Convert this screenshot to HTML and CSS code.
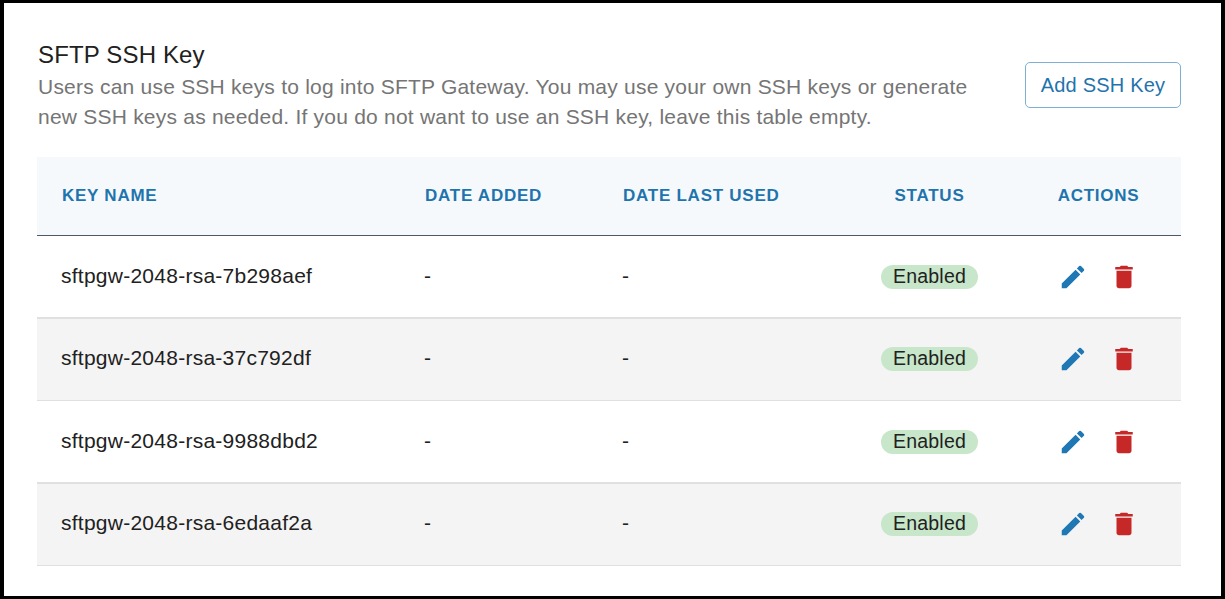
FILE: index.html
```html
<!DOCTYPE html>
<html lang="en">
<head>
<meta charset="utf-8">
<title>SFTP SSH Key</title>
<link rel="stylesheet" href="styles.css">
</head>
<body>
<main class="frame">
  <header class="head">
    <div class="intro">
      <h1 class="title">SFTP SSH Key</h1>
      <p class="desc">Users can use SSH keys to log into SFTP Gateway. You may use your own SSH keys or generate new SSH keys as needed. If you do not want to use an SSH key, leave this table empty.</p>
    </div>
    <button class="add" type="button">Add SSH Key</button>
  </header>
  <div class="table">
    <div class="row hdr">
      <div class="c">KEY NAME</div><div class="c">DATE ADDED</div><div class="c">DATE LAST USED</div><div class="c mid">STATUS</div><div class="c mid last">ACTIONS</div>
    </div>
    <div class="row">
      <div class="c t">sftpgw-2048-rsa-7b298aef</div><div class="c t">-</div><div class="c t">-</div><div class="c mid"><span class="badge">Enabled</span></div>
      <div class="c acts"><svg class="ico pen" viewBox="0 0 24 24"><path d="M3 17.25V21h3.75L17.81 9.94l-3.75-3.75L3 17.25zM20.71 7.04a1 1 0 0 0 0-1.41l-2.34-2.34a1 1 0 0 0-1.41 0l-1.83 1.83 3.75 3.75 1.83-1.83z"/></svg><svg class="ico bin" viewBox="0 0 24 24"><path d="M6 19c0 1.1.9 2 2 2h8c1.100 0 2-.9 2-2V7H6v12zM19 4h-3.500l-1-1h-5l-1 1H5v2h14V4z"/></svg></div>
    </div>
    <div class="row alt">
      <div class="c t">sftpgw-2048-rsa-37c792df</div><div class="c t">-</div><div class="c t">-</div><div class="c mid"><span class="badge">Enabled</span></div>
      <div class="c acts"><svg class="ico pen" viewBox="0 0 24 24"><path d="M3 17.25V21h3.75L17.81 9.94l-3.75-3.75L3 17.25zM20.71 7.04a1 1 0 0 0 0-1.41l-2.34-2.34a1 1 0 0 0-1.41 0l-1.83 1.83 3.75 3.75 1.83-1.83z"/></svg><svg class="ico bin" viewBox="0 0 24 24"><path d="M6 19c0 1.1.9 2 2 2h8c1.100 0 2-.9 2-2V7H6v12zM19 4h-3.500l-1-1h-5l-1 1H5v2h14V4z"/></svg></div>
    </div>
    <div class="row">
      <div class="c t">sftpgw-2048-rsa-9988dbd2</div><div class="c t">-</div><div class="c t">-</div><div class="c mid"><span class="badge">Enabled</span></div>
      <div class="c acts"><svg class="ico pen" viewBox="0 0 24 24"><path d="M3 17.25V21h3.75L17.81 9.94l-3.75-3.75L3 17.25zM20.71 7.04a1 1 0 0 0 0-1.41l-2.34-2.34a1 1 0 0 0-1.41 0l-1.83 1.83 3.75 3.75 1.83-1.83z"/></svg><svg class="ico bin" viewBox="0 0 24 24"><path d="M6 19c0 1.1.9 2 2 2h8c1.100 0 2-.9 2-2V7H6v12zM19 4h-3.500l-1-1h-5l-1 1H5v2h14V4z"/></svg></div>
    </div>
    <div class="row alt">
      <div class="c t">sftpgw-2048-rsa-6edaaf2a</div><div class="c t">-</div><div class="c t">-</div><div class="c mid"><span class="badge">Enabled</span></div>
      <div class="c acts"><svg class="ico pen" viewBox="0 0 24 24"><path d="M3 17.25V21h3.75L17.81 9.94l-3.75-3.75L3 17.25zM20.71 7.04a1 1 0 0 0 0-1.41l-2.34-2.34a1 1 0 0 0-1.41 0l-1.83 1.83 3.75 3.75 1.83-1.83z"/></svg><svg class="ico bin" viewBox="0 0 24 24"><path d="M6 19c0 1.1.9 2 2 2h8c1.100 0 2-.9 2-2V7H6v12zM19 4h-3.500l-1-1h-5l-1 1H5v2h14V4z"/></svg></div>
    </div>
  </div>
</main>
</body>
</html>
```
FILE: styles.css
```css
* { box-sizing: border-box; }
html, body { margin: 0; height: 100%; }
body { background: #fff; font-family: "Liberation Sans", Arial, sans-serif; overflow: hidden; }
.frame { height: 599px; width: 1225px; border: solid #000; border-width: 3px 4px 3px 4px; padding: 39px 40px 0 33px; }
.head { display: flex; justify-content: space-between; align-items: flex-start; height: 115px; }
.intro { width: 945px; padding-left: 1px; }
.title { margin: 0; font-size: 24px; font-weight: 400; line-height: 26px; color: #212121; letter-spacing: .15px; }
.desc { margin: 4px 0 0; font-size: 21px; line-height: 30px; color: #757575; letter-spacing: .22px; }
.add { width: 156px; height: 46px; margin-top: 20px; background: #fff; border: 1px solid #7fb0d3; border-radius: 5px; color: #1f74ad; font: 20px/24px "Liberation Sans", Arial, sans-serif; letter-spacing: .2px; padding: 0; }
.table { width: 1144px; }
.row { display: grid; grid-template-columns: 363px 198px 247px 169px 167px; height: 82px; border-bottom: 1px solid #e0e0e0; font-size: 21px; color: #212121; letter-spacing: .25px; }
.row:nth-child(even) { height: 83px; border-bottom-width: 2px; }
.hdr { height: 79px; background: #f6f9fc; border-bottom: 1px solid #4a5a68; color: #1f74ad; font-size: 17px; font-weight: 700; letter-spacing: .75px; }
.alt { background: #f4f4f4; padding-bottom: 1px; }
.c { display: flex; align-items: center; padding-left: 24px; }
.t { padding-bottom: 2px; }
.hdr .c { padding-left: 25px; }
.hdr .mid { padding-left: 0; }
.hdr .last { padding-left: 2px; }
.mid { justify-content: center; padding-left: 0; }
.acts { justify-content: flex-start; padding-left: 44px; gap: 21px; }
.badge { background: #c8e6c9; border-radius: 12px; height: 24px; line-height: 22px; padding: 0 12px; font-size: 19.5px; letter-spacing: .2px; }
.ico { width: 30px; height: 30px; flex: none; }
.pen { fill: #1f77b4; }
.bin { fill: #c62828; }
```
